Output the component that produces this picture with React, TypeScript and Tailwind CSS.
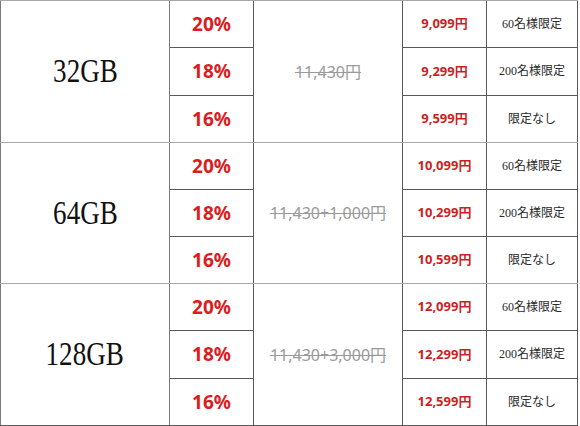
const groups = [
  {
    size: "32GB",
    base: "11,430円",
    prices: ["9,099円", "9,299円", "9,599円"],
    h: "h-[142px]",
  },
  {
    size: "64GB",
    base: "11,430+1,000円",
    prices: ["10,099円", "10,299円", "10,599円"],
    h: "h-[141px]",
  },
  {
    size: "128GB",
    base: "11,430+3,000円",
    prices: ["12,099円", "12,299円", "12,599円"],
    h: "h-[143px]",
  },
];

const rates = ["20%", "18%", "16%"];
const limits = ["60名様限定", "200名様限定", "限定なし"];

const sans = { fontFamily: '"Noto Sans", "Noto Sans CJK JP", sans-serif' };

function Stack({ items, className }: { items: string[]; className: string }) {
  return (
    <div className="flex h-full flex-col">
      {items.map((t, i) => (
        <div
          key={t}
          className={`flex flex-1 items-center justify-center ${i > 0 ? "border-t border-[#5a5a5a]" : ""} ${className}`}
        >
          {t}
        </div>
      ))}
    </div>
  );
}

export default function App() {
  return (
    <div className="h-[426px] w-[580px] overflow-hidden bg-white">
      <div className="w-[578px]">
        {groups.map((g, gi) => (
          <div
            key={g.size}
            className={`flex border-t border-[#a8a8a8] ${gi === 2 ? "border-b border-b-[#5a5a5a]" : ""} ${g.h}`}
          >
            <div className="flex w-[170px] shrink-0 items-center justify-center border-x border-[#7a7a7a]">
              <span
                className="inline-block scale-x-82 text-[33px] leading-none text-[#111]"
                style={{ fontFamily: '"Liberation Serif", serif' }}
              >
                {g.size}
              </span>
            </div>
            <div className="w-[84px] shrink-0 border-r border-[#5a5a5a]">
              <Stack items={rates} className="text-[19px] font-bold text-[#dc1c20]" />
            </div>
            <div className="flex w-[149px] shrink-0 items-center justify-center border-r border-[#5a5a5a]">
              <span className="text-[16px] text-[#9a9a9a] line-through" style={sans}>
                {g.base}
              </span>
            </div>
            <div className="w-[84px] shrink-0 border-r border-[#5a5a5a]" style={sans}>
              <Stack items={g.prices} className="text-[13px] font-bold text-[#cc1f1f]" />
            </div>
            <div
              className="w-[91px] shrink-0 border-r border-[#5a5a5a]"
              style={{ fontFamily: '"Liberation Serif", "Noto Sans CJK JP", serif' }}
            >
              <Stack items={limits} className="text-[12px] text-[#2a2a2a]" />
            </div>
          </div>
        ))}
      </div>
    </div>
  );
}
